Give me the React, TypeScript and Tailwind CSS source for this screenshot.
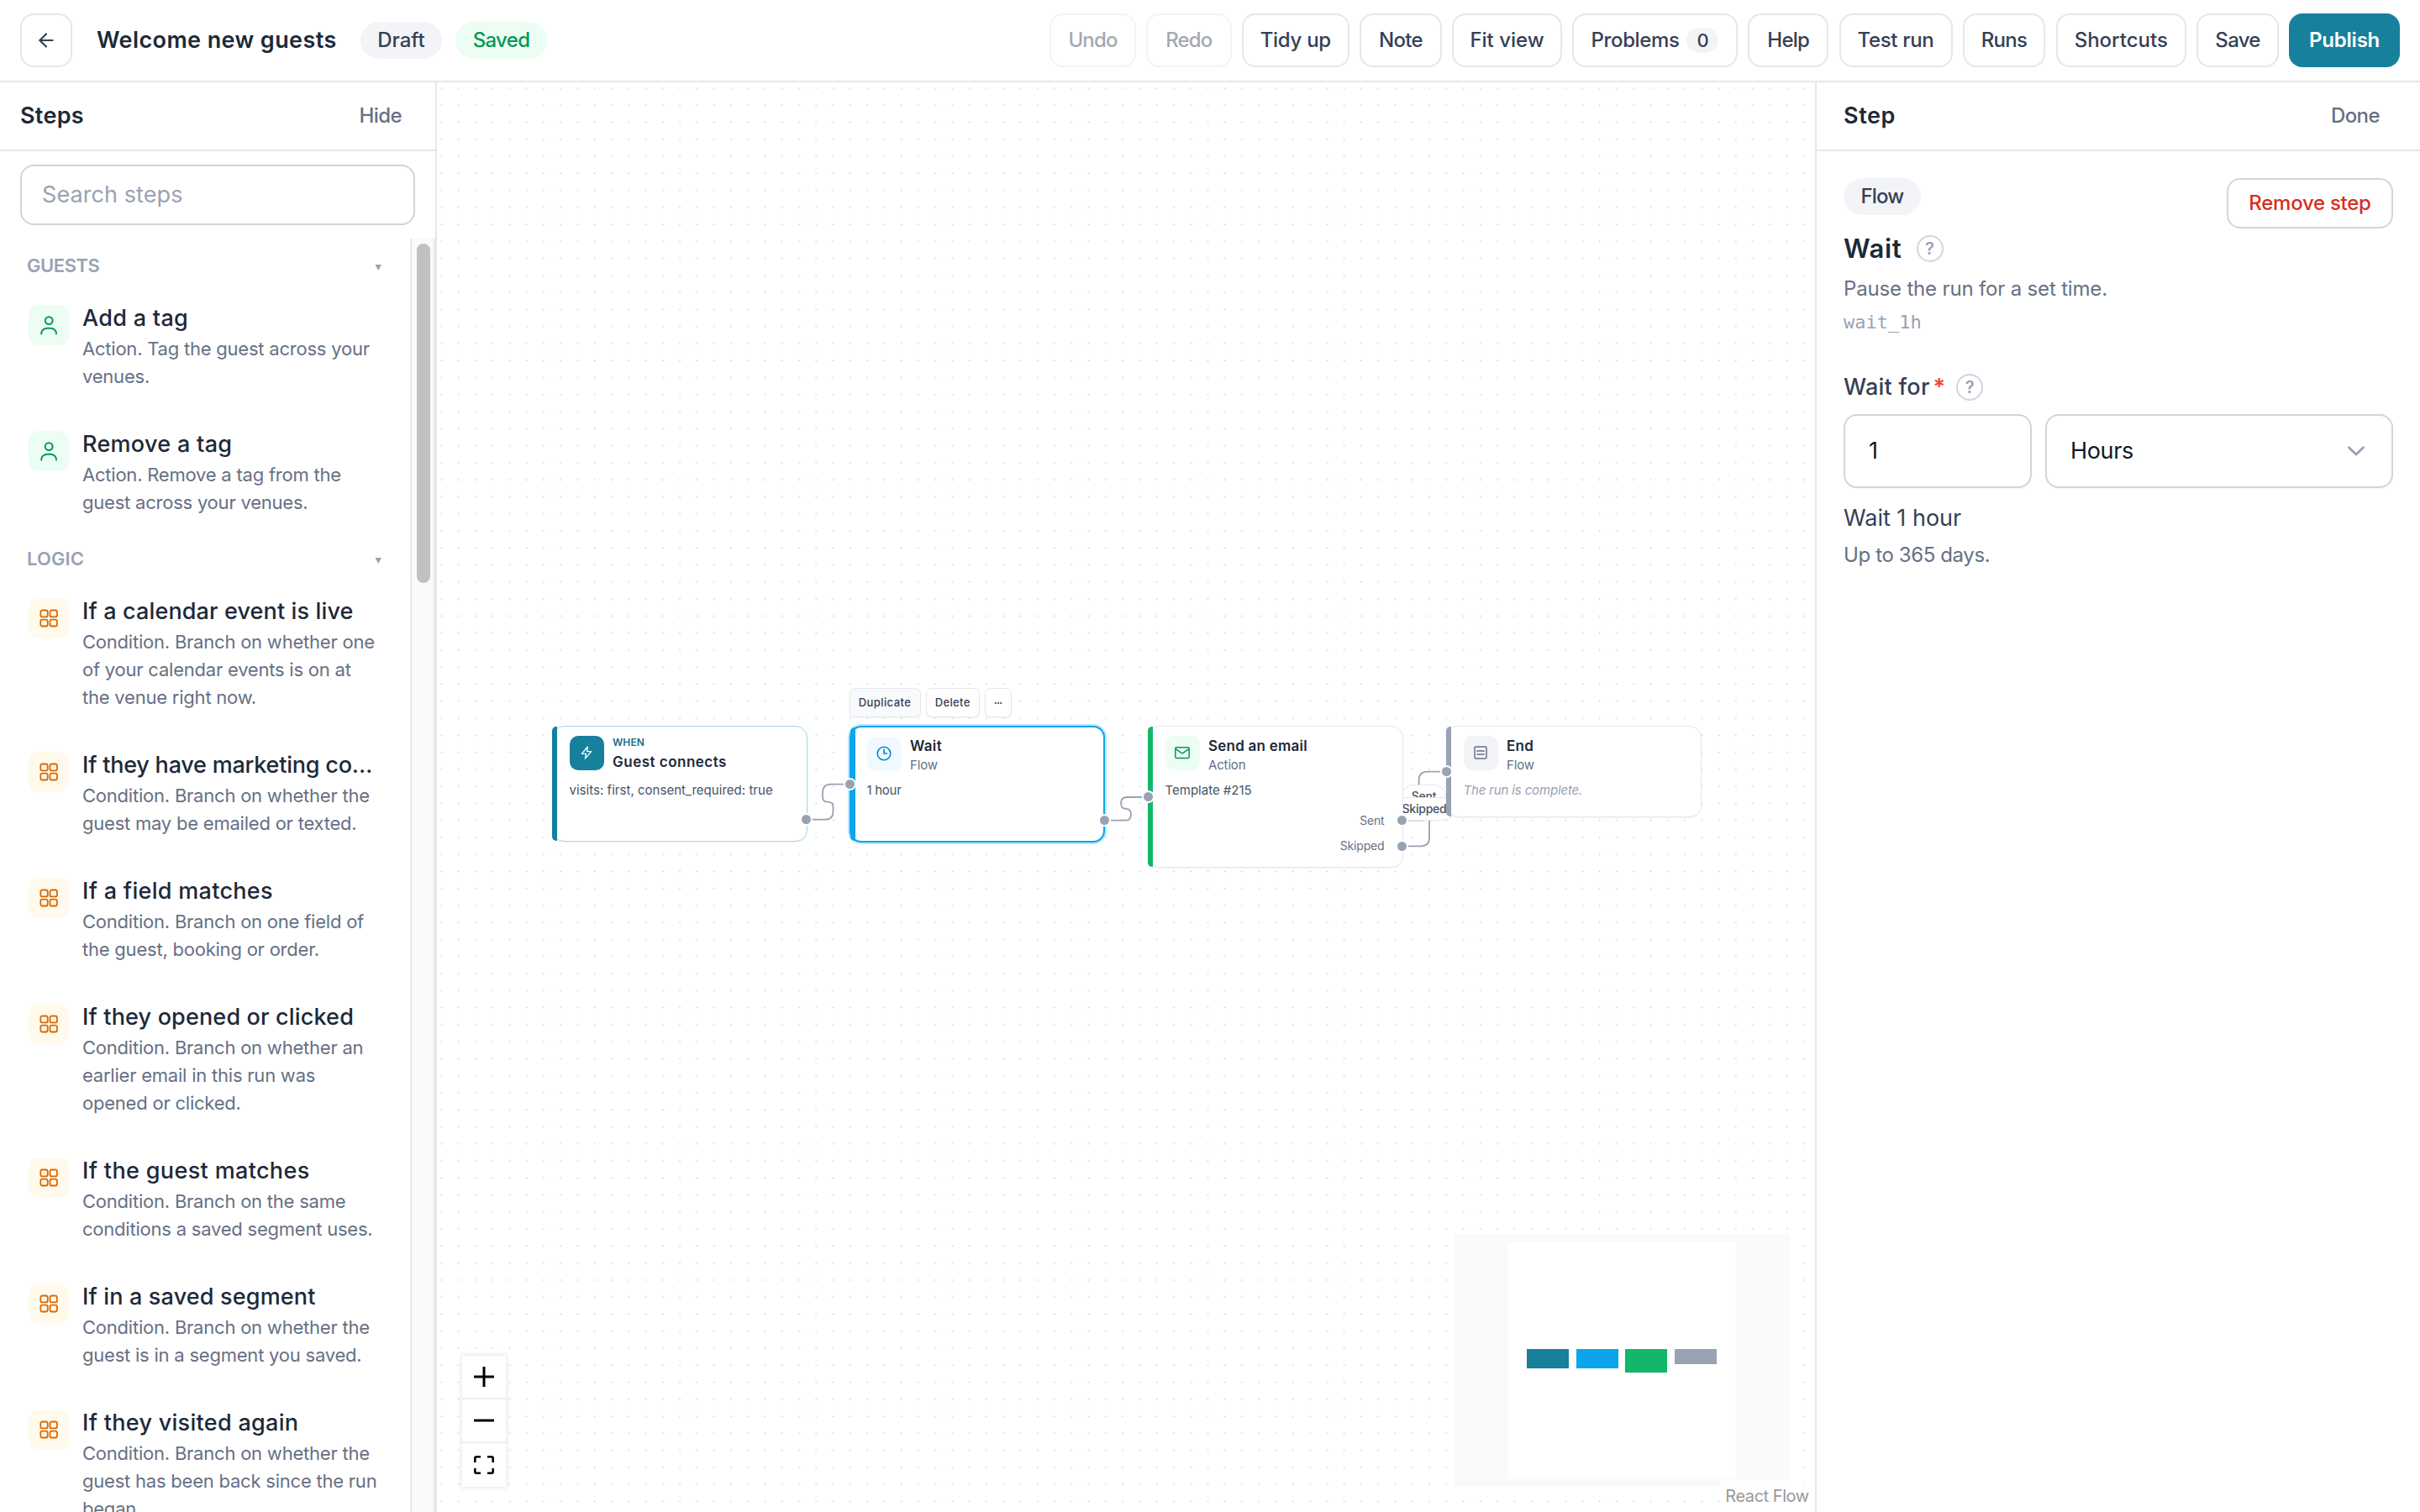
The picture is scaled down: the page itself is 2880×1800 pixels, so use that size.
import type { ReactNode } from "react";
import { ArrowLeft } from "lucide-react";
import clsx from "clsx";

type Step = { title: string; text: string; tracking?: string };

const guestSteps: Step[] = [
  { title: "Add a tag", text: "Action. Tag the guest across your venues." },
  { title: "Remove a tag", text: "Action. Remove a tag from the guest across your venues." },
];

const logicSteps: Step[] = [
  {
    title: "If a calendar event is live",
    text: "Condition. Branch on whether one of your calendar events is on at the venue right now.",
    tracking: "tracking-[0.005em]",
  },
  {
    title: "If they have marketing co…",
    text: "Condition. Branch on whether the guest may be emailed or texted.",
    tracking: "tracking-[-0.008em]",
  },
  { title: "If a field matches", text: "Condition. Branch on one field of the guest, booking or order." },
  {
    title: "If they opened or clicked",
    text: "Condition. Branch on whether an earlier email in this run was opened or clicked.",
    tracking: "tracking-[0.006em]",
  },
  {
    title: "If the guest matches",
    text: "Condition. Branch on the same conditions a saved segment uses.",
    tracking: "tracking-[0.013em]",
  },
  {
    title: "If in a saved segment",
    text: "Condition. Branch on whether the guest is in a segment you saved.",
    tracking: "tracking-[0.006em]",
  },
  {
    title: "If they visited again",
    text: "Condition. Branch on whether the guest has been back since the run began.",
  },
];

const toolbar = [
  { label: "Undo", className: "w-[102.5px] tracking-[-0.036em] opacity-45" },
  { label: "Redo", className: "w-[101.5px] tracking-[-0.036em] opacity-45" },
  { label: "Tidy up", className: "w-32 tracking-[-0.012em]" },
  { label: "Note", className: "w-[98px] tracking-[-0.03em]" },
  { label: "Fit view", className: "w-[130.5px]" },
  { label: "Problems", className: "w-[197px] tracking-[-0.016em]", count: 0 },
  { label: "Help", className: "w-24 tracking-[-0.03em]" },
  { label: "Test run", className: "w-[135px] tracking-[-0.014em]" },
  { label: "Runs", className: "w-[98.5px] tracking-[-0.03em]" },
  { label: "Shortcuts", className: "w-[155.5px]" },
  { label: "Save", className: "w-[97.5px] tracking-[-0.03em]" },
];

function UserIcon() {
  return (
    <svg width="28" height="28" viewBox="0 0 28 28" fill="none" stroke="currentColor" strokeWidth="2" strokeLinecap="round">
      <circle cx="14.2" cy="8.6" r="4.400" />
      <path d="M5.2 24.600v-.6c0-3.600 3.200-6.200 7-6.200h3.800c3.800 0 7 2.600 7 6.200v.6" />
    </svg>
  );
}

function GridIcon() {
  return (
    <svg width="28" height="28" viewBox="0 0 28 28" fill="none" stroke="currentColor" strokeWidth="1.8">
      <rect x="4.300" y="4.500" width="8.400" height="7.900" rx="2" />
      <rect x="15.500" y="4.500" width="8.400" height="7.900" rx="2" />
      <rect x="4.300" y="15.600" width="8.400" height="7.900" rx="2" />
      <rect x="15.500" y="15.600" width="8.400" height="7.900" rx="2" />
    </svg>
  );
}

function HelpDot() {
  return (
    <span className="flex size-8 items-center justify-center rounded-full border-2 border-[#d0d5dd] text-[20px] font-semibold leading-none text-[#98a2b3]">
      ?
    </span>
  );
}

function GroupLabel({ label, className }: { label: string; className?: string }) {
  return (
    <div className="flex h-[49px] items-start justify-between pl-8 pr-[31px] text-[#98a2b3]">
      <span className={clsx("text-[22px] font-semibold leading-[40px]", className)}>{label}</span>
      <svg className="mt-[19px]" width="14" height="8" viewBox="0 0 14 8" fill="currentColor">
        <path d="M3.500 0h7.500L7.200 7z" />
      </svg>
    </div>
  );
}

function StepItem({ step, kind }: { step: Step; kind: "guest" | "logic" }) {
  return (
    <div className="flex gap-4 pb-[30px] pl-[34px] pr-9 pt-[15px]">
      <span
        className={clsx(
          "mt-[3px] flex size-12 shrink-0 items-center justify-center rounded-xl",
          kind === "guest" ? "bg-[#ecfdf3] text-[#039855]" : "bg-[#fffaeb] text-[#dc6803]",
        )}
      >
        {kind === "guest" ? <UserIcon /> : <GridIcon />}
      </span>
      <div className="w-[352px] shrink-0">
        <h3
          className={clsx(
            "mt-px whitespace-nowrap text-[27px] font-medium leading-9 text-[#1d2939]",
            step.tracking ?? "tracking-[0.011em]",
          )}
        >
          {step.title}
        </h3>
        <p className="mt-[2px] text-[22px] leading-[33px] tracking-[-0.01em] text-[#667085]">{step.text}</p>
      </div>
    </div>
  );
}

function Handle({ className }: { className: string }) {
  return (
    <span className={clsx("absolute size-[15px] rounded-full border-[2.500px] border-white bg-[#98a2b3]", className)} />
  );
}

type FlowNodeProps = {
  frame: string;
  bar: string;
  iconBox: string;
  icon: ReactNode;
  heading: ReactNode;
  body: ReactNode;
  children?: ReactNode;
};

function FlowNode({ frame, bar, iconBox, icon, heading, body, children }: FlowNodeProps) {
  return (
    <article className={clsx("absolute w-[303.500px] rounded-[14px] bg-white", frame)}>
      <span className={clsx("absolute inset-y-0 -left-px w-[6px] rounded-l-[5px]", bar)} />
      <div className="pl-[19.500px] pt-[10.500px]">
        <div className="flex h-[41px] gap-[10.500px]">
          <span className={clsx("flex size-[41px] items-center justify-center rounded-[10px]", iconBox)}>{icon}</span>
          <div>{heading}</div>
        </div>
        {body}
      </div>
      {children}
    </article>
  );
}

function NodeHeading({ title, kind, className }: { title: string; kind: string; className?: string }) {
  return (
    <>
      <h4 className={clsx("text-[17px] font-semibold leading-6 text-[#1d2939]", className)}>{title}</h4>
      <p className="text-[15px] leading-[22px] tracking-[-0.01em] text-[#667085]">{kind}</p>
    </>
  );
}

function Canvas() {
  return (
    <main className="relative flex-1 overflow-hidden bg-white">
      <svg className="absolute inset-0" width="1640" height="1702" viewBox="520 98 1640 1702" fill="none">
        <defs>
          <pattern id="dots" x="515" y="95" width="20.270" height="20.270" patternUnits="userSpaceOnUse">
            <circle cx="10.300" cy="10" r="0.900" fill="#c8cbd1" />
          </pattern>
        </defs>
        <rect x="520" y="98" width="1640" height="1702" fill="url(#dots)" />
        <g stroke="#98a2b3" strokeWidth="1.800">
          <path d="M966 975.700H981.500Q991.500 975.700 991.500 965.700V961Q991.500 954.700 985.200 954.700Q979 954.700 979 948.500V943.700Q979 933.700 989 933.700H1006" />
          <path d="M1321 976.700H1339Q1346 976.700 1346 969.700Q1346 962.800 1340 962.800Q1334 962.800 1334 956Q1334 949 1341 949H1360" />
          <path d="M1675 976.700H1690Q1700.500 976.700 1700.500 967V957.500Q1700.500 947.700 1694.500 947.700Q1688.600 947.700 1688.600 941V929Q1688.600 918.700 1699 918.700H1715" />
          <path d="M1675 1007.300H1691Q1701 1007.300 1701 997.300V970" />
        </g>
      </svg>

      {/* edge labels */}
      <span className="absolute left-[1148px] top-[836px] flex h-[27px] w-[53px] items-center justify-center rounded-[14px] border border-[#e4e7ec] bg-white text-[14px] font-medium tracking-[-0.018em] text-[#475467]">
        Sent
      </span>
      <span className="absolute left-[1139px] top-[851px] flex h-[27.500px] w-[72px] items-center justify-center rounded-[14px] border border-[#e4e7ec] bg-white text-[14px] font-medium tracking-[-0.016em] text-[#475467]">
        Skipped
      </span>

      <FlowNode
        frame="left-[137px] top-[766px] h-[138px] border border-[#a3d9e8] shadow-xs"
        bar="bg-[#17809c]"
        iconBox="bg-[#17809c] text-white"
        icon={
          <svg width="20" height="20" viewBox="0 0 20 20" fill="none" stroke="currentColor" strokeWidth="1.300" strokeLinejoin="round">
            <path d="M11.400 3 4.300 11.400h5.200L8.400 17.200l7.300-8.600h-5.200z" />
          </svg>
        }
        heading={
          <>
            <p className="text-[12px] font-semibold leading-4 tracking-[0.009em] text-[#136e87]">WHEN</p>
            <h4 className="mt-[5px] text-[17px] font-semibold leading-5 tracking-[0.029em] text-[#1d2939]">
              Guest connects
            </h4>
          </>
        }
        body={
          <p className="mt-[13px] text-[15px] leading-[22px] tracking-[0.002em] text-[#475467]">
            visits: first, consent_required: true
          </p>
        }
      >
        <Handle className="-right-[7px] top-[103px]" />
      </FlowNode>

      <div className="absolute left-[490.500px] top-[721px] flex gap-[6px] text-[13px] font-medium text-[#344054]">
        <span className="flex h-[35px] w-[85px] items-center justify-center rounded-[7px] border border-[#e4e7ec] bg-[#f9fafb] tracking-[0.032em] shadow-xs">
          Duplicate
        </span>
        <span className="flex h-[35px] w-[64.500px] items-center justify-center rounded-[7px] border border-[#e4e7ec] bg-white tracking-[0.027em] shadow-xs">
          Delete
        </span>
        <span className="flex h-[35px] w-8 items-center justify-center rounded-[7px] border border-[#e4e7ec] bg-white shadow-xs">
          <svg width="10" height="4" viewBox="0 0 10 4" fill="currentColor">
            <circle cx="1.800" cy="2" r="1.100" />
            <circle cx="5" cy="2" r="1.100" />
            <circle cx="8.200" cy="2" r="1.100" />
          </svg>
        </span>
      </div>

      <FlowNode
        frame="left-[491px] top-[766px] h-[139px] border-2 border-[#0ba5ec] shadow-[0_0_0_2px_#b9e6fe]"
        bar="bg-[#0ba5ec]"
        iconBox="-ml-px bg-[#f0f9ff] text-[#0086c9]"
        icon={
          <svg width="20" height="20" viewBox="0 0 20 20" fill="none" stroke="currentColor" strokeWidth="1.600" strokeLinecap="round" strokeLinejoin="round">
            <circle cx="10" cy="10" r="7.800" />
            <path d="M10 5.200V10h3.400" />
          </svg>
        }
        heading={<NodeHeading title="Wait" kind="Flow" className="-mt-px tracking-[0.02em]" />}
        body={<p className="-ml-px mt-[12px] text-[15px] leading-[22px] tracking-[-0.019em] text-[#475467]">1 hour</p>}
      >
        <Handle className="-left-[9px] top-[60px]" />
        <Handle className="-right-[9px] top-[103px]" />
      </FlowNode>

      <FlowNode
        frame="left-[846px] top-[766px] h-[169px] border border-[#e4e7ec] shadow-xs"
        bar="bg-[#12b76a]"
        iconBox="bg-[#ecfdf3] text-[#039855]"
        icon={
          <svg width="20" height="20" viewBox="0 0 20 20" fill="none" stroke="currentColor" strokeWidth="1.500" strokeLinecap="round" strokeLinejoin="round">
            <rect x="1.800" y="3.800" width="16.400" height="12.800" rx="1.600" />
            <path d="m2.200 5.600 6.800 4.800q1 .7 2 0l6.800-4.800" />
          </svg>
        }
        heading={<NodeHeading title="Send an email" kind="Action" className="tracking-[0.014em]" />}
        body={
          <>
            <p className="mt-[13px] text-[15px] leading-[22px] text-[#475467]">Template #215</p>
            <div className="mt-[14.500px] flex flex-col gap-[8px] pr-[21px] text-right text-[14px] leading-[22px] tracking-[-0.012em] text-[#667085]">
              <span>Sent</span>
              <span>Skipped</span>
            </div>
          </>
        }
      >
        <Handle className="-left-[8px] top-[76px]" />
        <Handle className="-right-[7px] top-[104px]" />
        <Handle className="-right-[7px] top-[135px]" />
      </FlowNode>

      <FlowNode
        frame="left-[1201px] top-[766px] h-[109px] border border-[#e4e7ec] shadow-xs"
        bar="bg-[#98a2b3]"
        iconBox="bg-[#f2f4f7] text-[#667085]"
        icon={
          <svg width="20" height="20" viewBox="0 0 20 20" fill="none" stroke="currentColor" strokeWidth="1.500" strokeLinecap="round">
            <rect x="3" y="3" width="14" height="14" rx="1.600" />
            <path d="M5.800 8h8.400M5.800 12h8.400" />
          </svg>
        }
        heading={<NodeHeading title="End" kind="Flow" className="tracking-[0.014em]" />}
        body={
          <p className="mt-[13px] text-[15px] italic leading-[22px] tracking-[-0.01em] text-[#98a2b3]">
            The run is complete.
          </p>
        }
      >
        <Handle className="-left-[8px] top-[46px]" />
      </FlowNode>

      {/* zoom controls */}
      <div className="absolute left-[30px] top-[1516px] flex w-[52px] flex-col bg-white shadow-[0_0_4px_2px_rgba(0,0,0,0.08)]">
        <span className="flex h-[52px] items-center justify-center border-b-2 border-[#eee]">
          <svg width="24" height="24" viewBox="0 0 24 24" stroke="#000" strokeWidth="3">
            <path d="M0 12h24M12 0v24" />
          </svg>
        </span>
        <span className="flex h-[52px] items-center justify-center border-b-2 border-[#eee]">
          <svg width="24" height="24" viewBox="0 0 24 24" stroke="#000" strokeWidth="3">
            <path d="M0 12h24" />
          </svg>
        </span>
        <span className="flex h-[52px] items-center justify-center">
          <svg width="24" height="24" viewBox="0 0 24 24" fill="none" stroke="#000" strokeWidth="2.600">
            <path d="M1.300 9V4.300q0-2 2-2H8M16 2.300h4.700q2 0 2 2V9M22.700 16v3.700q0 2-2 2H16M8 21.700H3.300q-2 0-2-2V16" />
          </svg>
        </span>
      </div>

      {/* minimap */}
      <svg className="absolute left-[1210px] top-[1372px]" width="400" height="300" viewBox="1730 1470 400 300">
        <rect x="1730" y="1470" width="400" height="300" fill="#fafafa" />
        <rect x="1794.700" y="1479" width="271" height="281.500" fill="#fff" />
        <rect x="1817" y="1606" width="50" height="23" fill="#17809c" />
        <rect x="1876" y="1606" width="50" height="23" fill="#0ba5ec" />
        <rect x="1934" y="1606" width="50" height="28" fill="#12b76a" />
        <rect x="1993" y="1606" width="50" height="18" fill="#98a2b3" />
      </svg>
      <span className="absolute bottom-0 right-0 flex h-[38px] w-[113px] items-center justify-center bg-white/50 pr-px text-[20px] tracking-[-0.023em] text-[#999]">
        React Flow
      </span>
    </main>
  );
}

function StepsPanel() {
  return (
    <aside className="flex w-[520px] shrink-0 flex-col border-r-2 border-[#e4e7ec]">
      <div className="flex h-[82px] shrink-0 items-center justify-between border-b-2 border-[#e4e7ec] pl-6 pr-10">
        <h2 className="text-[27px] font-semibold tracking-[0.011em] text-[#1d2939]">Steps</h2>
        <span className="text-[24px] font-medium tracking-[-0.025em] text-[#667085]">Hide</span>
      </div>
      <div className="px-6 py-4">
        <div className="flex h-[72px] w-[470px] items-center rounded-2xl border-2 border-[#d0d5dd] px-6 pt-px text-[27px] tracking-[0.003em] text-[#98a2b3]">
          Search steps
        </div>
      </div>
      <div className="flex min-h-0 flex-1">
        <div className="w-[488px] overflow-hidden pt-3">
          <GroupLabel label="GUESTS" className="tracking-[-0.02em]" />
          {guestSteps.map((step) => (
            <StepItem key={step.title} step={step} kind="guest" />
          ))}
          <GroupLabel label="LOGIC" className="tracking-[0.005em]" />
          {logicSteps.map((step) => (
            <StepItem key={step.title} step={step} kind="logic" />
          ))}
        </div>
        <div className="w-[30px] border-x-2 border-[#e8e8e8] bg-[#fafafa] px-[6px] pt-[6px]">
          <div className="h-[404px] w-4 rounded-full bg-[#c1c1c1]" />
        </div>
      </div>
    </aside>
  );
}

function DetailsPanel() {
  return (
    <aside className="w-[720px] shrink-0 border-l-2 border-[#e4e7ec]">
      <div className="flex h-[82px] items-center justify-between border-b-2 border-[#e4e7ec] pl-8 pr-12">
        <h2 className="text-[27px] font-semibold tracking-[0.022em] text-[#1d2939]">Step</h2>
        <span className="text-[24px] font-medium tracking-[-0.024em] text-[#667085]">Done</span>
      </div>
      <div className="px-8 py-8">
        <div className="flex items-start justify-between">
          <div>
            <span className="flex h-11 w-[92px] items-center justify-center rounded-full bg-[#f2f4f7] text-[24px] font-medium tracking-[-0.034em] text-[#344054]">
              Flow
            </span>
            <div className="mt-6 flex h-8 items-center gap-[17px]">
              <h3 className="text-[31px] font-semibold leading-8 tracking-[0.022em] text-[#1d2939]">Wait</h3>
              <HelpDot />
            </div>
            <p className="mt-[14px] text-[24px] leading-9 tracking-[-0.007em] text-[#667085]">
              Pause the run for a set time.
            </p>
            <p className="mt-1 font-['DejaVu_Sans_Mono',monospace] text-[22px] leading-9 text-[#98a2b3]">wait_1h</p>
          </div>
          <span className="flex h-[60px] w-[198px] items-center justify-center rounded-2xl border-2 border-[#d0d5dd] text-[24px] font-medium tracking-[-0.011em] text-[#d92d20]">
            Remove step
          </span>
        </div>

        <div className="mt-[43px] flex h-8 items-center">
          <span className="text-[27px] font-medium tracking-[0.01em] text-[#344054]">Wait for</span>
          <span className="ml-[4px] text-[27px] font-semibold text-[#f04438]">*</span>
          <span className="ml-[13px]">
            <HelpDot />
          </span>
        </div>
        <div className="mt-4 flex h-[88px] gap-4 text-[27px] tracking-[-0.013em] text-[#101828]">
          <div className="flex w-56 items-center rounded-2xl border-2 border-[#d0d5dd] px-7 shadow-xs">1</div>
          <div className="flex flex-1 items-center justify-between rounded-2xl border-2 border-[#d0d5dd] pl-7 pr-[31px] shadow-xs">
            <span>Hours</span>
            <svg width="22" height="14" viewBox="0 0 22 14" fill="none" stroke="#98a2b3" strokeWidth="2.800" strokeLinecap="round" strokeLinejoin="round">
              <path d="m2.500 2.800 8.500 8.200 8.500-8.200" />
            </svg>
          </div>
        </div>
        <p className="mt-[16px] text-[27px] leading-10 text-[#344054]">Wait 1 hour</p>
        <p className="mt-[6px] text-[24px] leading-9 tracking-[-0.016em] text-[#667085]">Up to 365 days.</p>
      </div>
    </aside>
  );
}

export default function App() {
  return (
    <div className="flex h-[1800px] w-[2880px] flex-col overflow-hidden bg-white font-['Inter','Liberation_Sans',sans-serif]">
      <header className="flex h-[98px] shrink-0 items-center justify-between border-b-2 border-[#e4e7ec] px-6">
        <div className="flex items-center">
          <span className="flex h-16 w-[62px] items-center justify-center rounded-2xl border-2 border-[#e4e7ec] text-[#344054]">
            <ArrowLeft size={26} strokeWidth={2} />
          </span>
          <h1 className="ml-[29px] w-[314px] whitespace-nowrap text-[27px] font-semibold tracking-[0.015em] text-[#1d2939]">
            Welcome new guests
          </h1>
          <span className="flex h-11 w-[97px] items-center justify-center rounded-full bg-[#f2f4f7] text-[24px] font-medium text-[#344054]">
            Draft
          </span>
          <span className="ml-4 flex h-11 w-[109px] items-center justify-center rounded-full bg-[#ecfdf3] text-[24px] font-medium tracking-[-0.028em] text-[#039855]">
            Saved
          </span>
        </div>
        <nav className="flex items-center gap-[12.250px]">
          {toolbar.map(({ label, className, count }) => (
            <span
              key={label}
              className={clsx(
                "flex h-16 items-center justify-center gap-[9px] whitespace-nowrap rounded-2xl border-2 border-[#e4e7ec] text-[24px] font-medium text-[#344054]",
                className,
              )}
            >
              {label}
              {count !== undefined && (
                <span className="flex h-[30px] w-[38px] items-center justify-center rounded-full bg-[#f2f4f7] text-[22px]">
                  {count}
                </span>
              )}
            </span>
          ))}
          <span className="flex h-16 w-[132px] items-center justify-center rounded-2xl bg-[#17809c] text-[24px] font-semibold tracking-[-0.008em] text-white">
            Publish
          </span>
        </nav>
      </header>
      <div className="flex min-h-0 flex-1">
        <StepsPanel />
        <Canvas />
        <DetailsPanel />
      </div>
    </div>
  );
}
